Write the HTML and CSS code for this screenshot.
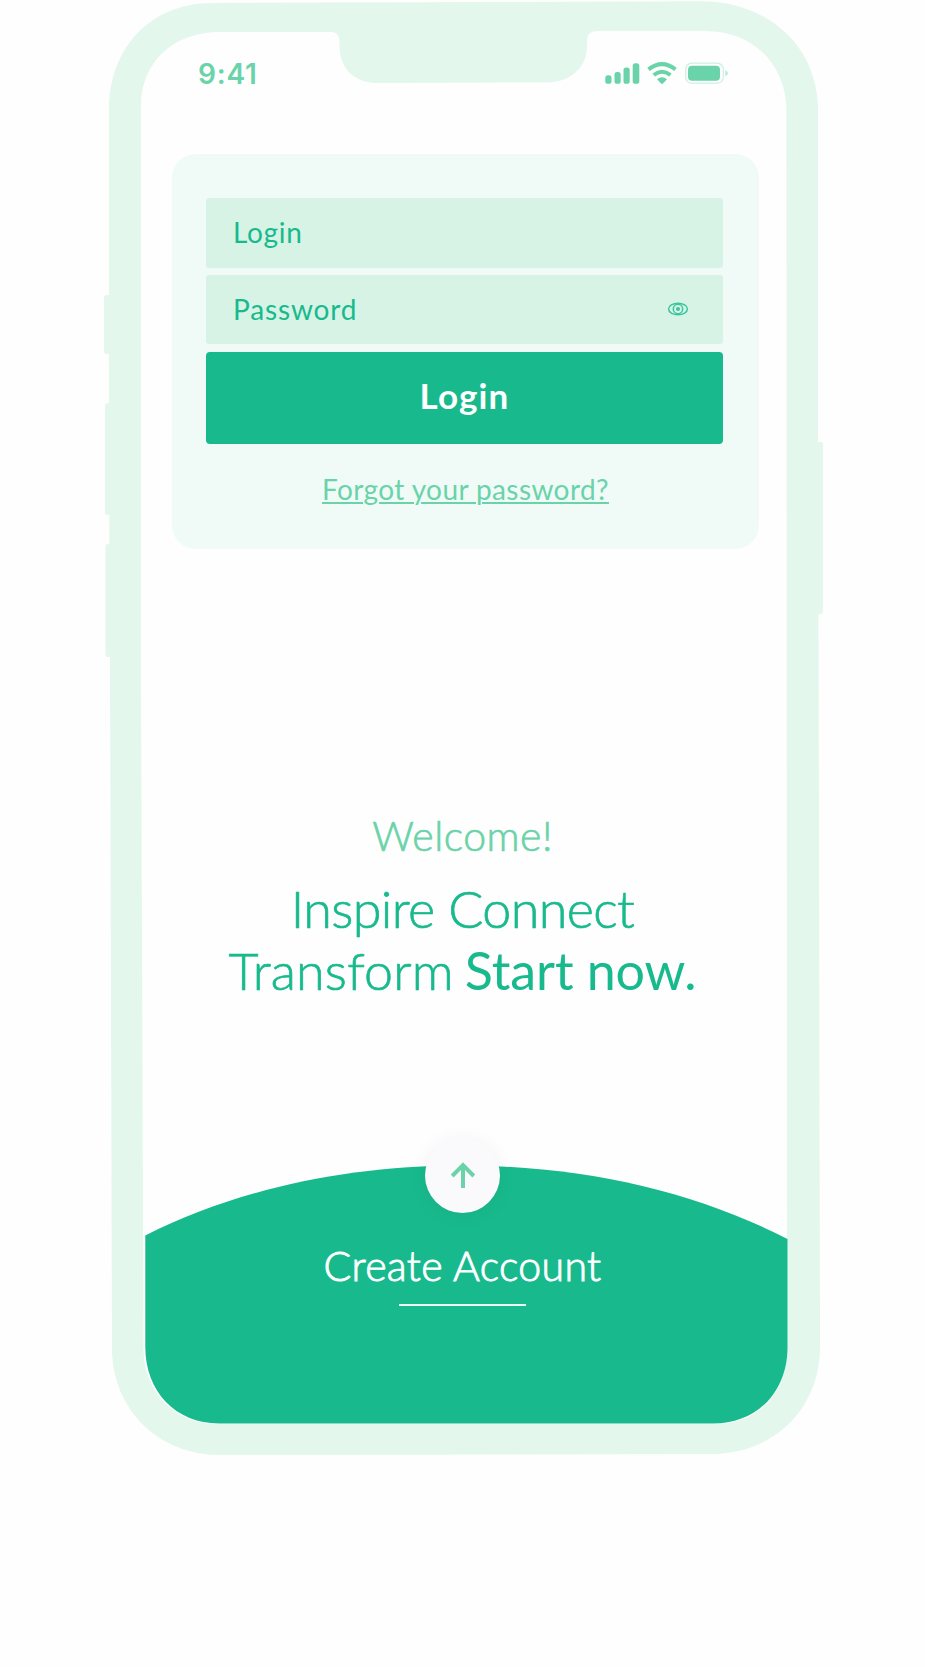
FILE: index.html
```html
<!DOCTYPE html>
<html lang="en">
<head>
<meta charset="utf-8">
<title>Login</title>
<link rel="stylesheet" href="styles.css">
</head>
<body>
<main class="phone">
  <svg class="frame" viewBox="0 0 925 1667" aria-hidden="true">
    <path class="shell" fill-rule="evenodd" d="M109 108C110 46 152 3 212 3L700 1.3C768 1 817 46 818 108V442H821Q823 442 823 445V611Q823 614 821 614H818.5L820 1347C820 1408 775 1454 710 1454L220 1455C158 1455 112 1409 112 1348L110 657H108Q105.500 657 105.500 654V547Q105.500 544 108 544H109.300V515H107.500Q105 515 105 512V406Q105 403 107.500 403H109V354H107Q104 354 104 351V298Q104 295 107 295H109Z
    M141 106C141 63 172 32 220 32H331Q339 32 339.500 41V46C339.500 68 354 83 377 83L546 82.500C570 82.500 587 68 587 46V41Q587 31 597 31H705C754 31 786 65 786.500 110L787 1350C787 1395 756 1424 715 1424H217C174 1424 144 1391 143.500 1350L141 680Z"/>
    <path class="hill" d="M145.300 1235.500C235 1190 345 1165.500 462 1165.500C582 1165.500 694 1191 787.500 1239V1347C787.500 1392 757 1423.500 713 1423.500H219C175 1423.500 145.300 1391 145.300 1347Z"/>
  </svg>

  <header class="status">
    <span class="time">9:41</span>
    <svg class="indicators" viewBox="0 0 124 24" aria-hidden="true">
      <rect x="0.300" y="13.300" width="6.200" height="8.500" rx="2.600"/>
      <rect x="9.500" y="10" width="6.200" height="11.800" rx="2.600"/>
      <rect x="18.500" y="5.600" width="6.200" height="16.200" rx="2.600"/>
      <rect x="27.700" y="1.200" width="6.600" height="20.600" rx="2.600"/>
      <path class="wave" d="M43.500 7.300Q57 -3 70.500 7.300M48.700 13Q57 6.600 65.500 13"/>
      <path d="M52 17.200Q57 13.300 62 17.200L58.200 21.300Q57 22.600 55.800 21.300Z"/>
      <rect class="case" x="80.700" y="1.200" width="37.600" height="20" rx="6"/>
      <rect x="83" y="3.800" width="32" height="15" rx="4"/>
      <path class="tip" d="M120.300 8.300Q122.800 9.200 122.800 11.300Q122.800 13.400 120.300 14.300Z"/>
    </svg>
  </header>

  <section class="card">
    <div class="field"><span class="label-login">Login</span></div>
    <div class="field">
      <span class="label-password">Password</span>
      <svg class="eye" viewBox="0 0 22 16" aria-hidden="true">
        <ellipse cx="11" cy="8" rx="9.400" ry="5.800"/>
        <circle cx="11" cy="8" r="4.700"/>
        <circle class="pupil" cx="11" cy="8" r="2"/>
      </svg>
    </div>
    <div class="submit"><span>Login</span></div>
    <a class="forgot">Forgot your password?</a>
  </section>

  <section class="intro">
    <div class="welcome">Welcome!</div>
    <div class="line-one">Inspire Connect</div>
    <div class="line-two"><span>Transform</span><strong>Start now.</strong></div>
  </section>

  <section class="create">
    <div class="up">
      <svg viewBox="0 0 28 28" aria-hidden="true"><path d="M14 26V3.500M3.200 14L14 3.200L24.800 14"/></svg>
    </div>
    <div class="create-title">Create Account</div>
    <div class="rule"></div>
  </section>
</main>
</body>
</html>
```
FILE: styles.css
```css
* { box-sizing: border-box; }

body {
  margin: 0;
  background: #fefefe;
  font-family: Lato, "Open Sans", sans-serif;
  color: #18ba8d;
}

.phone {
  position: relative;
  width: 925px;
  height: 1667px;
  display: flex;
  flex-direction: column;
  white-space: nowrap;
}

.frame {
  position: absolute;
  inset: 0;
  width: 925px;
  height: 1667px;
  z-index: -1;
}
.shell { fill: #e3f7ec; }
.hill { fill: #18ba8d; }

.status {
  display: flex;
  justify-content: space-between;
  height: 154px;
  padding: 57px 196px 0 198px;
  color: #6ad3a9;
}
.time {
  font: 600 28px/34px Inter, sans-serif;
  letter-spacing: 0.8px;
}
.indicators {
  width: 124px;
  height: 24px;
  margin: 5px 0 0;
  fill: #6ad3a9;
}
.wave { fill: none; stroke: #6ad3a9; stroke-width: 4; }
.case { fill: none; stroke: #cdf0e2; stroke-width: 1.2; }
.tip { fill: #b5e9d4; }

.card {
  width: 587px;
  height: 395px;
  margin-left: 172px;
  padding: 44px 36px 0 34px;
  background: #f0fbf8;
  border-radius: 24px;
  display: flex;
  flex-direction: column;
}
.field {
  height: 69.500px;
  margin-bottom: 7.300px;
  padding: 0 34px 1px 27px;
  border-radius: 3px;
  background: #d6f3e6;
  display: flex;
  align-items: center;
  justify-content: space-between;
  font-size: 28px;
}
.label-login { letter-spacing: 0.700px; }
.label-password { letter-spacing: 0.850px; }
.eye {
  width: 22px;
  height: 16px;
  fill: none;
  stroke: #3cc59d;
  stroke-width: 1.5;
}
.pupil { fill: #3cc59d; stroke: none; }
.submit {
  height: 92.500px;
  padding: 0 0 5px 0;
  border-radius: 4px;
  background: #18ba8d;
  color: #fff;
  font-size: 35px;
  font-weight: 700;
  letter-spacing: 1.100px;
  display: flex;
  align-items: center;
  justify-content: center;
}
.forgot {
  margin: 28px 0 0 2px;
  align-self: center;
  color: #6ad3a9;
  font-size: 28px;
  line-height: 34px;
  letter-spacing: 0.400px;
  text-decoration: underline;
  text-decoration-thickness: 1.500px;
  text-underline-offset: 2px;
}

.intro {
  margin-top: 262px;
  height: 327px;
  display: flex;
  flex-direction: column;
  align-items: center;
  font-weight: 300;
  -webkit-text-stroke: 0.700px currentColor;
}
.welcome { font-size: 41px; line-height: 50px; letter-spacing: 0.500px; color: #6ad3a9; }
.line-one { font-size: 52px; line-height: 62px; margin-top: 16px; letter-spacing: -0.600px; }
.line-two { font-size: 52px; line-height: 62px; letter-spacing: 0.200px; display: flex; gap: 11px; }
.line-two strong { font-weight: 400; letter-spacing: -0.100px; -webkit-text-stroke: 0; }

.create {
  display: flex;
  flex-direction: column;
  align-items: center;
  color: #fff;
}
.up {
  width: 75px;
  height: 75px;
  border-radius: 50%;
  background: #fafafc;
  box-shadow: 0 2px 20px rgba(0, 0, 0, 0.06);
  display: flex;
  align-items: center;
  justify-content: center;
}
.up svg {
  width: 28px;
  height: 28px;
  fill: none;
  stroke: #6ad3a9;
  stroke-width: 4;
}
.create-title {
  margin-top: 28px;
  font-size: 41px;
  line-height: 50px;
  font-weight: 300;
  letter-spacing: 0.350px;
  -webkit-text-stroke: 0.900px currentColor;
}
.rule { width: 127px; height: 2px; margin-top: 13px; background: #eefaf6; }
```
